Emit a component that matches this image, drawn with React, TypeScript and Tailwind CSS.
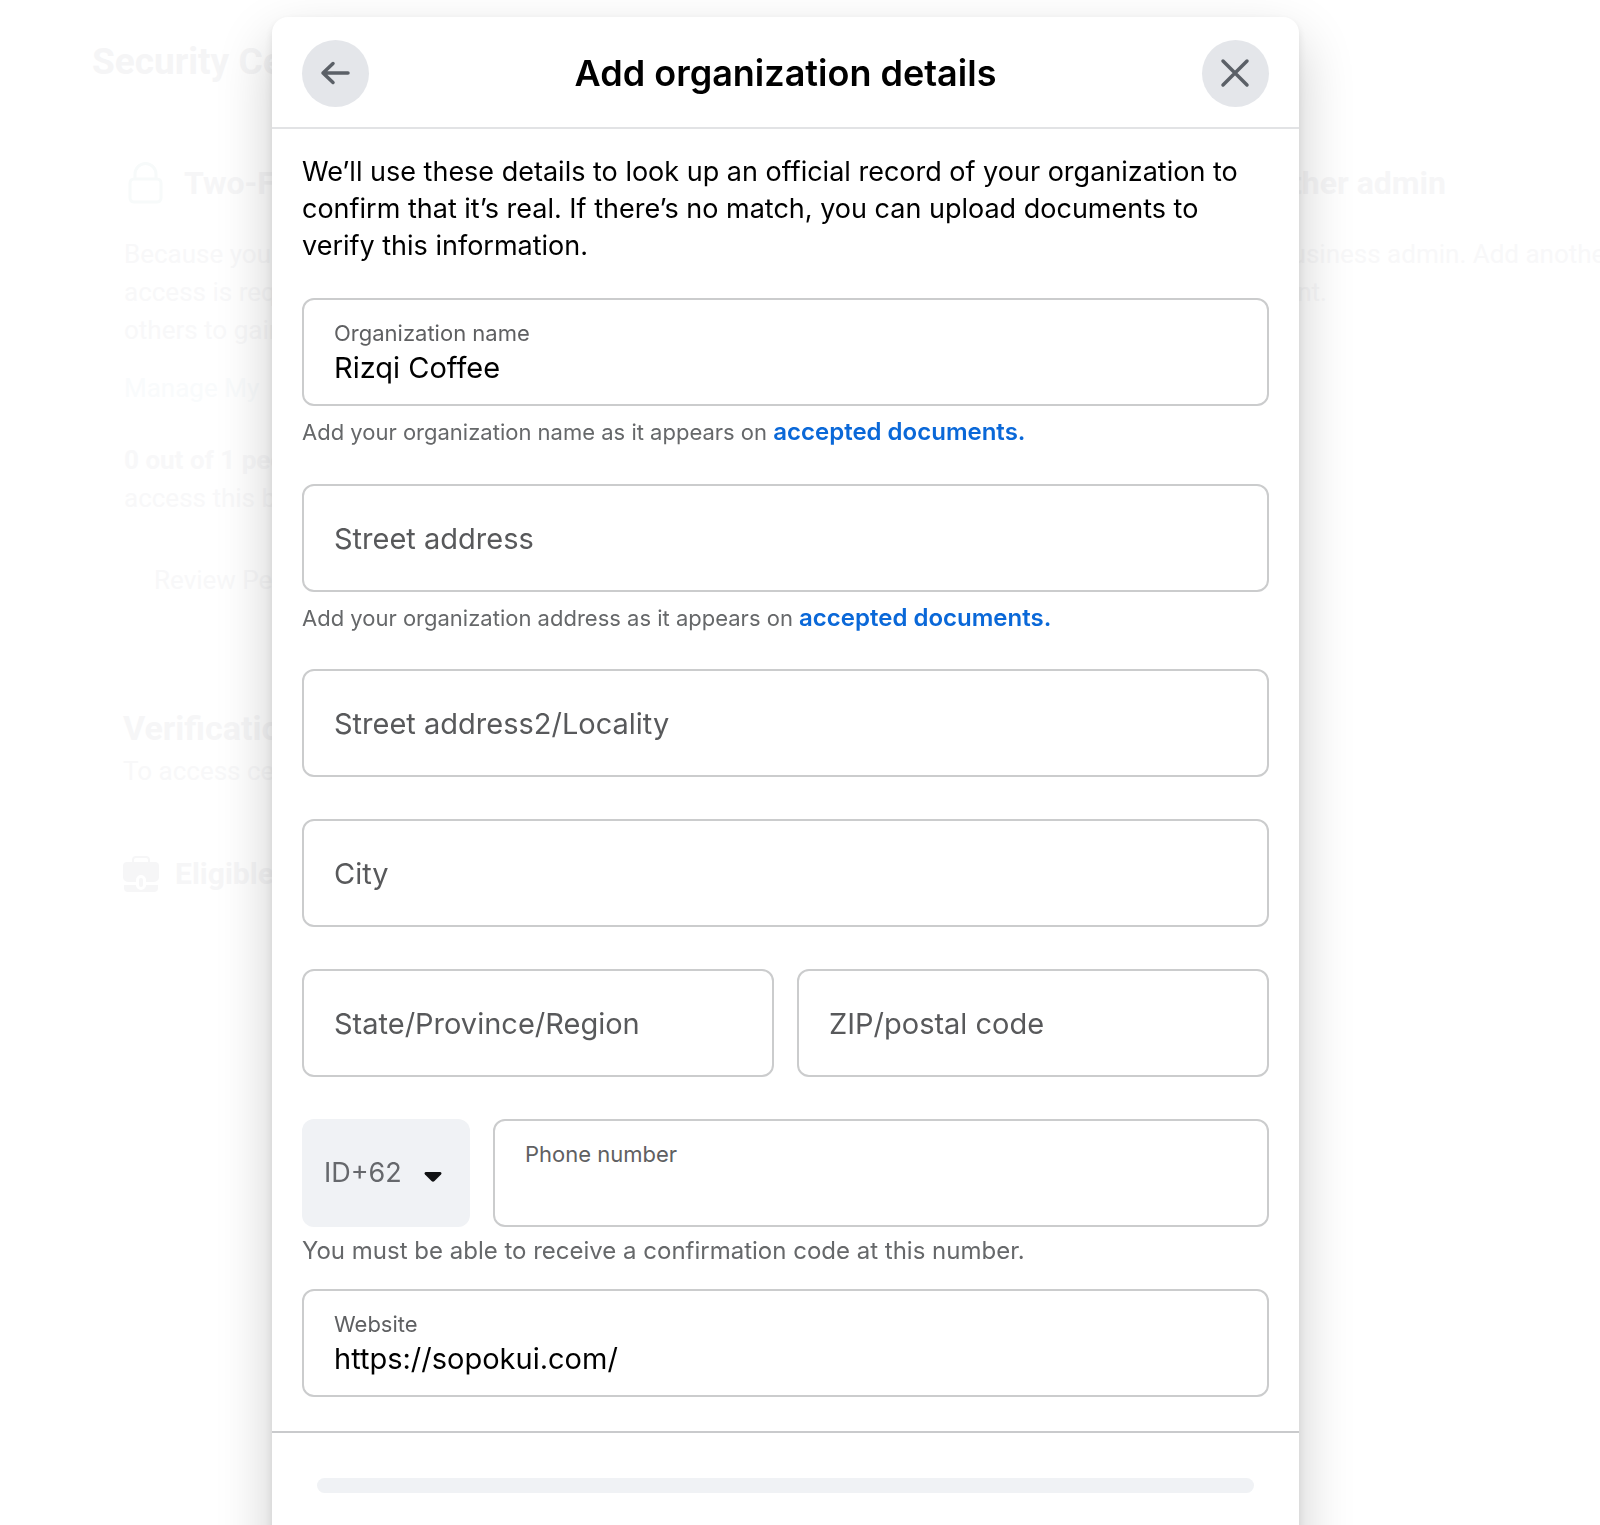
import type { ReactNode } from "react";

function Page() {
  return (
    <div
      aria-hidden="true"
      className="h-screen overflow-hidden pt-[41px] pl-[92px] font-[Roboto,sans-serif] text-[26px] leading-[38px] whitespace-nowrap text-[#f8f8f9]"
    >
      <div className="text-[37px] font-bold leading-[42px] text-[#f5f5f6]">Security Ce</div>

      <div className="flex pt-[74px] pl-8">
        {/* Two-factor card */}
        <div className="w-[1153px] shrink-0">
          <div className="flex items-center gap-5 pl-1">
            <LockIcon />
            <div className="text-[32px] font-bold leading-[52px] text-[#f6f6f7]">Two-F</div>
          </div>
          <p className="pt-[26px]">
            Because you
            <br />
            access is req
            <br />
            others to gain
          </p>
          <p className="pt-5 text-[#f9fbfc]">Manage My</p>
          <p className="pt-[34px] font-bold">0 out of 1 peo</p>
          <p>access this b</p>
          <p className="pt-11 pl-[30px]">Review Peo</p>
        </div>

        {/* Another admin card */}
        <div>
          <div className="pl-3.5 text-[32px] font-bold leading-[52px] text-[#f6f6f7]">ther admin</div>
          <p className="pt-[26px]">
            business admin. Add another
            <br />
            &nbsp;ent.
          </p>
        </div>
      </div>

      <div className="pt-[105px] pl-[31px]">
        <div className="text-[34px] font-bold leading-[48px] text-[#f6f6f7]">Verificatio</div>
        <p>To access cer</p>
        <div className="flex items-center gap-4 pt-[60px]">
          <BriefcaseIcon />
          <div className="text-[30px] font-bold leading-[48px] text-[#f6f6f7]">Eligible</div>
        </div>
      </div>
    </div>
  );
}

function LockIcon() {
  return (
    <svg width="36" height="42" viewBox="0 0 36 42" fill="none" stroke="#f7fafa" strokeWidth="3">
      <rect x="2" y="17" width="31" height="23" rx="4" />
      <path d="M7 17v-5a10.500 10.500 0 0 1 21 0v5" />
    </svg>
  );
}

function BriefcaseIcon() {
  return (
    <svg width="36" height="36" viewBox="0 0 36 36" fill="#f6f6f7">
      <path d="M10 6V4a3 3 0 0 1 3-3h10a3 3 0 0 1 3 3v2" fill="none" stroke="#f6f6f7" strokeWidth="2" />
      <path d="M4 6h28a4 4 0 0 1 4 4v11a5 5 0 0 1-5 5h-8v-2a5 5 0 0 0-10 0v2H5a5 5 0 0 1-5-5V10a4 4 0 0 1 4-4Z" />
      <path d="M1 29h12a5 5 0 0 0 10 0h12v3a4 4 0 0 1-4 4H5a4 4 0 0 1-4-4Z" />
      <rect x="16" y="22" width="4" height="9" rx="2" />
    </svg>
  );
}

type FieldProps = {
  id: string;
  label: string;
  value?: string;
  type?: string;
  floating?: boolean;
};

function Field({ id, label, value, type = "text", floating }: FieldProps) {
  if (!floating) {
    return (
      <input
        id={id}
        type={type}
        aria-label={label}
        placeholder={label}
        className="h-[108px] w-full min-w-0 rounded-xl border-2 border-[#cbcccd] bg-white px-[30px] text-[29px] text-black outline-none placeholder:text-[#58595b] placeholder:opacity-100"
      />
    );
  }
  return (
    <div className="flex h-[108px] w-full min-w-0 flex-col rounded-xl border-2 border-[#cbcccd] bg-white px-[30px] pt-[17px]">
      <label htmlFor={id} className="text-[22px] leading-8 text-[#5f6062]">
        {label}
      </label>
      <input
        id={id}
        type={type}
        defaultValue={value}
        className="h-[38px] w-full bg-transparent text-[29px] text-black outline-none"
      />
    </div>
  );
}

function Hint({ children }: { children: ReactNode }) {
  return <p className="pt-2 text-[22px] leading-9 text-[#66686a]">{children}</p>;
}

function DocumentsLink() {
  return (
    <a href="#" className="text-2xl leading-9 font-semibold text-[#0a68d8]">
      accepted documents.
    </a>
  );
}

function RoundButton({ label, children }: { label: string; children: ReactNode }) {
  return (
    <button
      type="button"
      aria-label={label}
      className="flex size-[67px] items-center justify-center rounded-full bg-[#e4e6ea] text-[#5b6067]"
    >
      {children}
    </button>
  );
}

export default function App() {
  return (
    <div className="bg-white">
      <Page />

      <div className="fixed inset-0 flex justify-center overflow-hidden pt-[17px] pr-[29px]">
        <div
          role="dialog"
          aria-labelledby="dialog-title"
          className="h-[1600px] w-full max-w-[1027px] rounded-t-2xl bg-white font-[Inter,sans-serif] shadow-[0_24px_56px_rgba(0,0,0,0.2),0_4px_10px_rgba(0,0,0,0.1)]"
        >
          <header className="flex h-28 items-center justify-between border-b-2 border-[#e2e3e5] px-[30px] pt-0.5">
            <RoundButton label="Back">
              <svg width="32" height="24" viewBox="0 0 32 24" fill="none" stroke="currentColor" strokeWidth="3.500" strokeLinecap="round" strokeLinejoin="round">
                <path d="M28 12H3M13 2.500 3 12l10 9.500" />
              </svg>
            </RoundButton>
            <h1 id="dialog-title" className="text-4xl font-semibold text-black">
              Add organization details
            </h1>
            <RoundButton label="Close">
              <svg width="30" height="30" viewBox="0 0 30 30" fill="none" stroke="currentColor" strokeWidth="3.500" strokeLinecap="round">
                <path d="m3 3 24 24M27 3 3 27" />
              </svg>
            </RoundButton>
          </header>

          <form className="border-b-2 border-[#c9cacc] px-[30px] pt-6 pb-[34px]">
            <p className="text-[27px] leading-[37px] text-black">
              We’ll use these details to look up an official record of your organization to confirm that it’s real. If
              there’s no match, you can upload documents to verify this information.
            </p>

            <div className="pt-[34px]">
              <Field id="org-name" label="Organization name" value="Rizqi Coffee" floating />
              <Hint>
                Add your organization name as it appears on <DocumentsLink />
              </Hint>
            </div>

            <div className="pt-[34px]">
              <Field id="street" label="Street address" />
              <Hint>
                Add your organization address as it appears on <DocumentsLink />
              </Hint>
            </div>

            <div className="flex flex-col gap-[42px] pt-[33px]">
              <Field id="street2" label="Street address2/Locality" />
              <Field id="city" label="City" />
              <div className="grid grid-cols-2 gap-[23px]">
                <Field id="state" label="State/Province/Region" />
                <Field id="zip" label="ZIP/postal code" />
              </div>
              <div>
                <div className="flex gap-[23px]">
                  <div className="relative w-[168px] shrink-0">
                    <select
                      aria-label="Country code"
                      className="h-[108px] w-full appearance-none rounded-xl bg-[#f0f2f5] pl-[22px] text-[27px] text-[#66686c] outline-none"
                    >
                      <option>ID+62</option>
                    </select>
                    <svg
                      width="18"
                      height="12"
                      viewBox="0 0 18 12"
                      fill="#111214"
                      className="pointer-events-none absolute top-[52px] right-7"
                    >
                      <path d="M2 1h14c1.500 0 2 1.500 1 2.500l-6.500 6.500c-1 1-2 1-3 0L1 3.500C0 2.500.5 1 2 1Z" />
                    </svg>
                  </div>
                  <Field id="phone" label="Phone number" type="tel" floating />
                </div>
                <p className="pt-1.5 text-2xl leading-9 text-[#66686a]">
                  You must be able to receive a confirmation code at this number.
                </p>
              </div>
            </div>

            <div className="pt-5">
              <Field id="website" label="Website" type="url" value="https://sopokui.com/" floating />
            </div>
          </form>

          <footer className="px-[45px] pt-[45px]">
            <div className="h-[15px] rounded-full bg-[#f0f2f5]" />
          </footer>
        </div>
      </div>
    </div>
  );
}
